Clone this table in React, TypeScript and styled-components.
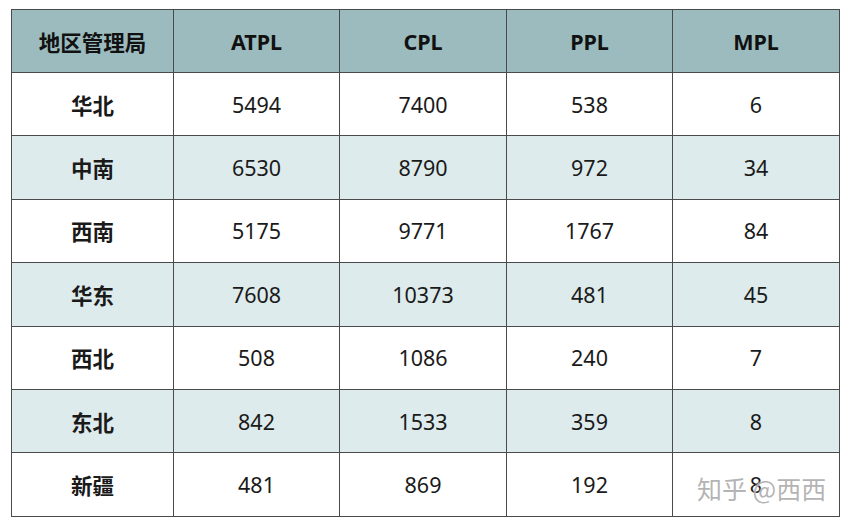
import React from "react";
import styled, { createGlobalStyle } from "styled-components";

const Global = createGlobalStyle`
  html, body {
    margin: 0;
    padding: 0;
    background: #fff;
  }
`;

const Page = styled.div`
  position: relative;
  width: 854px;
  height: 525px;
  padding: 9px 0 0 11px;
  box-sizing: border-box;
  font-family: "Noto Sans", "Noto Sans CJK SC", sans-serif;
`;

const Table = styled.table`
  border-collapse: collapse;
  table-layout: fixed;
  width: 829px;
  border: 1px solid #4a4a4a;
`;

const Col = styled.col<{ w: number }>`
  width: ${(p) => p.w}px;
`;

const HeadCell = styled.th`
  height: 62px;
  padding: 0;
  background: #9bbbbe;
  border: 1px solid #4a4a4a;
  font-size: 21.5px;
  font-weight: 700;
  color: #111;
  text-align: center;
`;

const Row = styled.tr<{ striped: boolean }>`
  background: ${(p) => (p.striped ? "#deebec" : "#fff")};
`;

const Cell = styled.td<{ bold?: boolean }>`
  height: 62.4px;
  padding: 0;
  border: 1px solid #4a4a4a;
  font-size: 21.5px;
  font-weight: ${(p) => (p.bold ? 700 : 400)};
  color: #1a1a1a;
  text-align: center;
`;

const Watermark = styled.div`
  position: absolute;
  left: 697px;
  top: 470px;
  font-size: 25px;
  color: rgba(160, 160, 160, 0.8);
  font-family: "Noto Sans CJK SC", sans-serif;
  text-shadow: 0 0 2px #fff;
`;

const rows: [string, number, number, number, number][] = [
  ["华北", 5494, 7400, 538, 6],
  ["中南", 6530, 8790, 972, 34],
  ["西南", 5175, 9771, 1767, 84],
  ["华东", 7608, 10373, 481, 45],
  ["西北", 508, 1086, 240, 7],
  ["东北", 842, 1533, 359, 8],
  ["新疆", 481, 869, 192, 8],
];

const App: React.FC = () => {
  return (
    <Page>
      <Global />
      <Table>
        <colgroup>
          <Col w={162} />
          <Col w={166} />
          <Col w={167} />
          <Col w={166} />
          <Col w={167} />
        </colgroup>
        <thead>
          <tr>
            <HeadCell>地区管理局</HeadCell>
            <HeadCell>ATPL</HeadCell>
            <HeadCell>CPL</HeadCell>
            <HeadCell>PPL</HeadCell>
            <HeadCell>MPL</HeadCell>
          </tr>
        </thead>
        <tbody>
          {rows.map((r, i) => (
            <Row key={r[0]} striped={i % 2 === 1}>
              <Cell bold>{r[0]}</Cell>
              <Cell>{r[1]}</Cell>
              <Cell>{r[2]}</Cell>
              <Cell>{r[3]}</Cell>
              <Cell>{r[4]}</Cell>
            </Row>
          ))}
        </tbody>
      </Table>
      <Watermark>知乎 @西西</Watermark>
    </Page>
  );
};

export default App;
